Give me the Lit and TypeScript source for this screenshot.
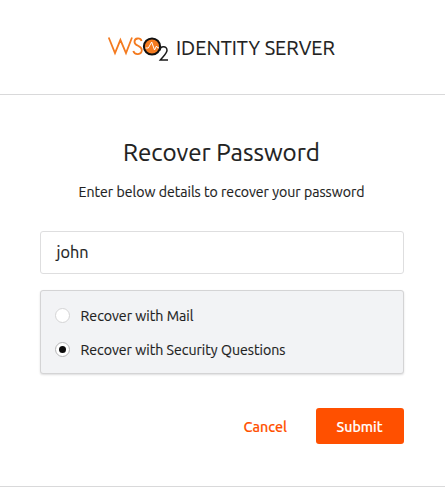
import { LitElement, html, css } from "lit";
import { customElement, state } from "lit/decorators.js";

@customElement("app-root")
export class AppRoot extends LitElement {
  @state() private method = "questions";

  static styles = css`
    :host { display: block; height: 487px; background: #fff; font-family: Ubuntu, "Open Sans", "Noto Sans", sans-serif; overflow: hidden; }
    * { box-sizing: border-box; }
    header { height: 95px; border-bottom: 1px solid #d9d9da; display: flex; align-items: center; padding: 0 0 0 107px; }
    .logo { width: 62px; height: 26px; margin-top: 4px; flex: none; }
    .t { display: block; overflow: visible; flex: none; }
    .t text { stroke-width: .15px; }
    main { height: 392px; border-bottom: 1px solid #d9d9da; padding: 0 41px 0 40px; display: flex; flex-direction: column; }
    .product { margin: 2px 0 0 7px; }
    .title { margin: 39px 0 0 83px; }
    .sub { margin: 11px 0 0 38px; }
    .field { margin-top: 29px; height: 43px; border: 1px solid #dededf; border-radius: 3px; padding: 8px 15px; }
    .panel { margin-top: 16px; height: 84px; border: 1px solid #d4d4d5; border-radius: 3px; background: #f2f3f5; box-shadow: 0 1px 2px rgba(34,36,38,.15); padding: 15px 14px; display: flex; flex-direction: column; gap: 16px; }
    .opt { display: flex; gap: 10px; height: 18px; align-items: center; }
    .dot { width: 15px; height: 15px; border: 1px solid #d4d4d5; border-radius: 50%; background: #fff; display: grid; place-items: center; }
    .on { border-color: #b5b5b6; }
    .on::after { content: ""; width: 7px; height: 7px; border-radius: 50%; background: #0d0d0d; }
    .actions { margin-top: 34px; display: flex; justify-content: flex-end; align-items: center; gap: 29px; }
    .submit { background: #ff5000; border-radius: 3px; width: 88px; height: 36px; padding-left: 20px; display: grid; align-items: center; }
  `;

  private text(s: string, size: number, width: number, cls = "", fill = "#212121", weight = 400, x = 0.5) {
    return html`<svg class="t ${cls}" width=${Math.round(width)} height=${Math.round(size * 1.5)}><text x=${x} y=${Math.round(size * 1.12)} font-size=${size} textLength=${width} lengthAdjust="spacingAndGlyphs" fill=${fill} stroke=${fill} font-weight=${weight}>${s}</text></svg>`;
  }

  private option(id: string, label: string, width: number) {
    return html`<div class="opt" @click=${() => (this.method = id)}><span class="dot ${this.method === id ? "on" : ""}"></span>${this.text(label, 14, width)}</div>`;
  }

  render() {
    return html`<header>
        <svg class="logo" viewBox="0 0 62 26" fill="none" stroke="#f47b20" stroke-width="1.8">
          <path d="M1.7 1.5 8 17 13.4 3.8 19 17 25 1.5M34.6 5C33.5 1.5 27.5 1.5 27.5 5.9 27.5 10.2 34.8 9.4 34.8 14 34.8 19.2 27.5 19.2 26.3 15"/>
          <circle cx="45" cy="10.5" r="8.1" fill="#f47b20" stroke="#111" stroke-width="2"/>
          <path d="M38.5 12H41.3L44.7 6 47.5 14 49.5 10 50.5 11.8H52" stroke="#fff" stroke-width="1"/>
          <path d="M53 14.5C53 9.5 60 9.5 60 14.2 60 17.3 56.5 20 53.3 24H61" stroke="#1a1a1a" stroke-width="1.5"/>
        </svg>
        ${this.text("IDENTITY SERVER", 20, 159, "product", "#212121", 400, 0)}
      </header>
      <main>
        ${this.text("Recover Password", 24, 197, "title", "#212121", 400, 0)}
        ${this.text("Enter below details to recover your password", 14, 286, "sub")}
        <div class="field">${this.text("john", 16, 32)}</div>
        <div class="panel">${this.option("mail", "Recover with Mail", 113)}${this.option("questions", "Recover with Security Questions", 205)}</div>
        <div class="actions">${this.text("Cancel", 14, 43.5, "", "#ff5000", 500)}<div class="submit">${this.text("Submit", 14, 46, "", "#fff", 500)}</div></div>
      </main>`;
  }
}
